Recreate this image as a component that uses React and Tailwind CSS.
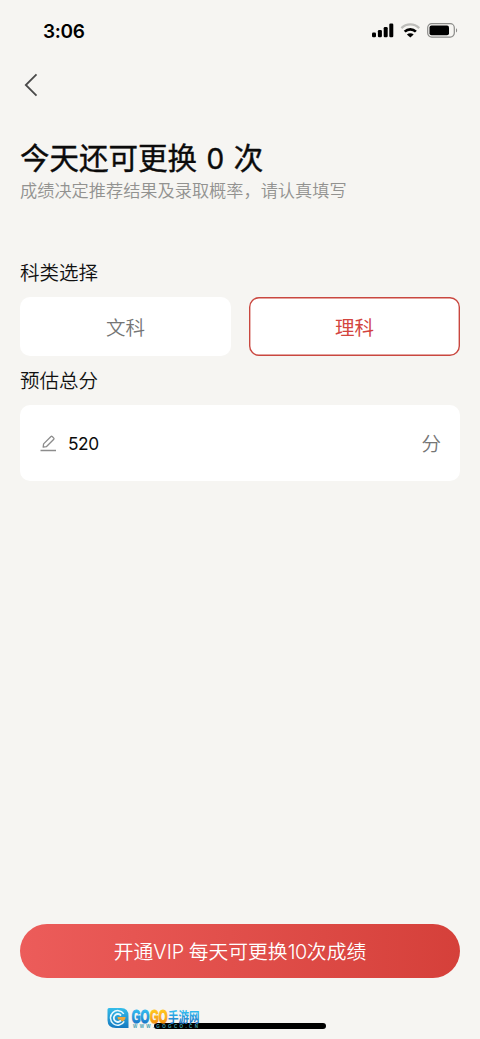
import React, { useState } from 'react';

const SUBJECTS = ['文科', '理科'];

function StatusBar() {
  return (
    <div className="flex h-[60px] flex-shrink-0 items-center justify-between pl-[43px] pr-[22px] text-black">
      <span className="mt-[3px] text-[19px] leading-6 font-semibold tracking-[-0.3px] font-['Inter',sans-serif]">3:06</span>
      <div className="flex items-center">
        {/* signal */}
        <svg width="22" height="15" viewBox="0 0 22 15" fill="currentColor">
          <rect x="0" y="9.6" width="4" height="4.7" rx="1.2" />
          <rect x="5.9" y="7" width="4" height="7.3" rx="1.2" />
          <rect x="11.7" y="4" width="4" height="10.3" rx="1.2" />
          <rect x="17.3" y="0.5" width="4" height="13.8" rx="1.2" />
        </svg>
        {/* wifi */}
        <svg className="ml-1.5" width="21" height="15" viewBox="0 0 21 15" fill="none">
          <path d="M1.4 5.1C6.4 .1 14.2 .1 19.2 5.1" stroke="#bdbdba" strokeWidth="2.3" />
          <path d="M4.7 8.6C7.9 5.5 12.7 5.5 15.9 8.6" stroke="currentColor" strokeWidth="2.7" />
          <path d="M6.9 11.5C8.8 9.8 11.8 9.8 13.7 11.5L10.3 14.6Z" fill="currentColor" />
        </svg>
        {/* battery */}
        <svg className="ml-1.5" width="31" height="15" viewBox="0 0 31 15" fill="none">
          <rect x="0.7" y="0.7" width="26.6" height="13.4" rx="4" stroke="#8b8b89" strokeWidth="1.2" />
          <rect x="2.5" y="2.5" width="19.5" height="9.8" rx="2" fill="currentColor" />
          <path d="M29 5.2C30.5 5.8 30.5 9 29 9.6Z" fill="#8b8b89" />
        </svg>
      </div>
    </div>
  );
}

function SubjectTabs({ value, onChange }) {
  return (
    <div className="mt-[11px] grid grid-cols-2 gap-[18px]">
      {SUBJECTS.map((name) => (
        <button
          key={name}
          onClick={() => onChange(name)}
          className={`h-[59px] rounded-[10px] bg-white text-[19.5px] ${
            value === name
              ? 'text-[#d3453f] shadow-[inset_0_0_0_1.4px_#c9473f]'
              : 'font-[350] text-[#757575]'
          }`}
        >
          {name}
        </button>
      ))}
    </div>
  );
}

function EditIcon() {
  return (
    <svg width="17" height="17" viewBox="0 0 17 17" fill="none" stroke="#8c8c8c" strokeWidth="1.3" strokeLinejoin="round">
      <path d="M3.2 12.2L3.6 8.9L11 1.5Q11.6 1 12.2 1.5L13.8 3.1Q14.3 3.7 13.8 4.2L6.3 11.7Z" />
      <path d="M0.5 15.5H16" strokeWidth="1.5" />
    </svg>
  );
}

function SiteMark() {
  return (
    <div className="absolute left-[107px] top-[1007px] flex">
      <svg width="22" height="22" viewBox="0 0 22 22">
        <defs>
          <linearGradient id="mark" x1="0" y1="0" x2="0" y2="1">
            <stop offset="0" stopColor="#35bde9" />
            <stop offset="1" stopColor="#1579c0" />
          </linearGradient>
        </defs>
        <path d="M2 1H14Q21.5 1 21.5 9V21H9Q.5 21 .5 13V2.5Q.5 1 2 1Z" fill="url(#mark)" />
        <path d="M16.8 6.8A7.3 7.3 0 1 0 17.2 14.4" fill="none" stroke="#e8f8fd" strokeWidth="1.5" />
        <path d="M14 8.6A4 4 0 1 0 14 13.4" fill="none" stroke="#e8f8fd" strokeWidth="1.8" />
        <path d="M10.5 10H18.6Q18.3 13.6 14.6 14.6L13.6 12.4H11Z" fill="#f0a63a" />
      </svg>
      <svg className="ml-0.5 overflow-visible" width="69" height="22" viewBox="0 0 69 22">
        <defs>
          <linearGradient id="blue" x1="0" y1="0" x2="0" y2="1">
            <stop offset="0.2" stopColor="#30b7ed" />
            <stop offset="0.9" stopColor="#176fc4" />
          </linearGradient>
          <linearGradient id="gold" x1="0" y1="0" x2="0" y2="1">
            <stop offset="0.2" stopColor="#ffc51c" />
            <stop offset="0.9" stopColor="#f08a0c" />
          </linearGradient>
        </defs>
        <g className="font-['Liberation_Sans','Noto_Sans_CJK_SC',sans-serif] font-bold">
          <text x="0.8" y="15.9" fontSize="18" textLength="17.6" lengthAdjust="spacingAndGlyphs" fill="url(#blue)" stroke="url(#blue)" strokeWidth="1.2">GO</text>
          <text x="18.9" y="15.9" fontSize="18" textLength="17.6" lengthAdjust="spacingAndGlyphs" fill="url(#gold)" stroke="url(#gold)" strokeWidth="1.2">GO</text>
          <text x="37" y="15.2" fontSize="13.5" textLength="31.5" lengthAdjust="spacingAndGlyphs" fill="url(#blue)">手游网</text>
          <text x="2" y="21.2" fontSize="4.5" textLength="65" fill="#3fa0b0">WWW.GOGCO.CN</text>
        </g>
      </svg>
    </div>
  );
}

function App() {
  const [subject, setSubject] = useState('理科');
  const [score, setScore] = useState('520');

  return (
    <div className="relative flex h-[1039px] w-[480px] flex-col overflow-hidden bg-[#f6f5f2] font-['Noto_Sans_CJK_SC',sans-serif]">
      <StatusBar />
      <header className="flex h-[50px] flex-shrink-0 items-center pl-6">
        <button aria-label="返回">
          <svg width="14" height="24" viewBox="0 0 14 24" fill="none" stroke="#4a4a4a" strokeWidth="1.8">
            <path d="M12.5 1.3L1.8 12L12.5 22.7" />
          </svg>
        </button>
      </header>

      <main className="flex flex-1 flex-col px-5">
        <h1 className="mt-[27px] h-[38px] text-[29.5px] leading-[38px] whitespace-pre text-[#0b0b0b] [-webkit-text-stroke:0.4px_#0b0b0b]">
          今天还可更换<span className="mx-[9.5px] text-[28px] font-['Inter',sans-serif]">0</span>次
        </h1>
        <p className="mt-[2px] h-[26px] text-[17.2px] leading-[26px] font-[350] whitespace-nowrap text-[#929290]">成绩决定推荐结果及录取概率，请认真填写</p>

        <h2 className="mt-[55px] h-7 text-[19.5px] leading-7 font-[350] text-[#111]">科类选择</h2>
        <SubjectTabs value={subject} onChange={setSubject} />

        <h2 className="mt-[10px] h-7 text-[19.5px] leading-7 font-[350] text-[#111]">预估总分</h2>
        <div className="mt-[11px] flex h-[76px] items-center rounded-[10px] bg-white pl-5 pr-[19px]">
          <EditIcon />
          <input
            value={score}
            onChange={(e) => setScore(e.target.value)}
            className="ml-[11px] min-w-0 flex-1 pt-0.5 text-[17.3px] tracking-[-0.4px] text-[#0b0b0b] outline-none font-['Inter',sans-serif]"
          />
          <span className="text-[19.5px] font-[350] text-[#757575]">分</span>
        </div>

        <button className="mt-auto mb-[61px] h-[54px] rounded-full bg-linear-to-r from-[#ec5c5a] to-[#d5403a] pt-0.5 text-[19.8px] font-[350] text-white">
          开通<span className="font-light font-['Inter',sans-serif]">VIP</span> 每天可更换<span className="font-light tracking-[-0.4px] font-['Inter',sans-serif]">10</span>次成绩
        </button>
      </main>

      {/* home indicator */}
      <div className="absolute left-[154px] top-[1023px] h-1.5 w-[172px] rounded-full bg-black" />
      <SiteMark />
    </div>
  );
}

export default App;
